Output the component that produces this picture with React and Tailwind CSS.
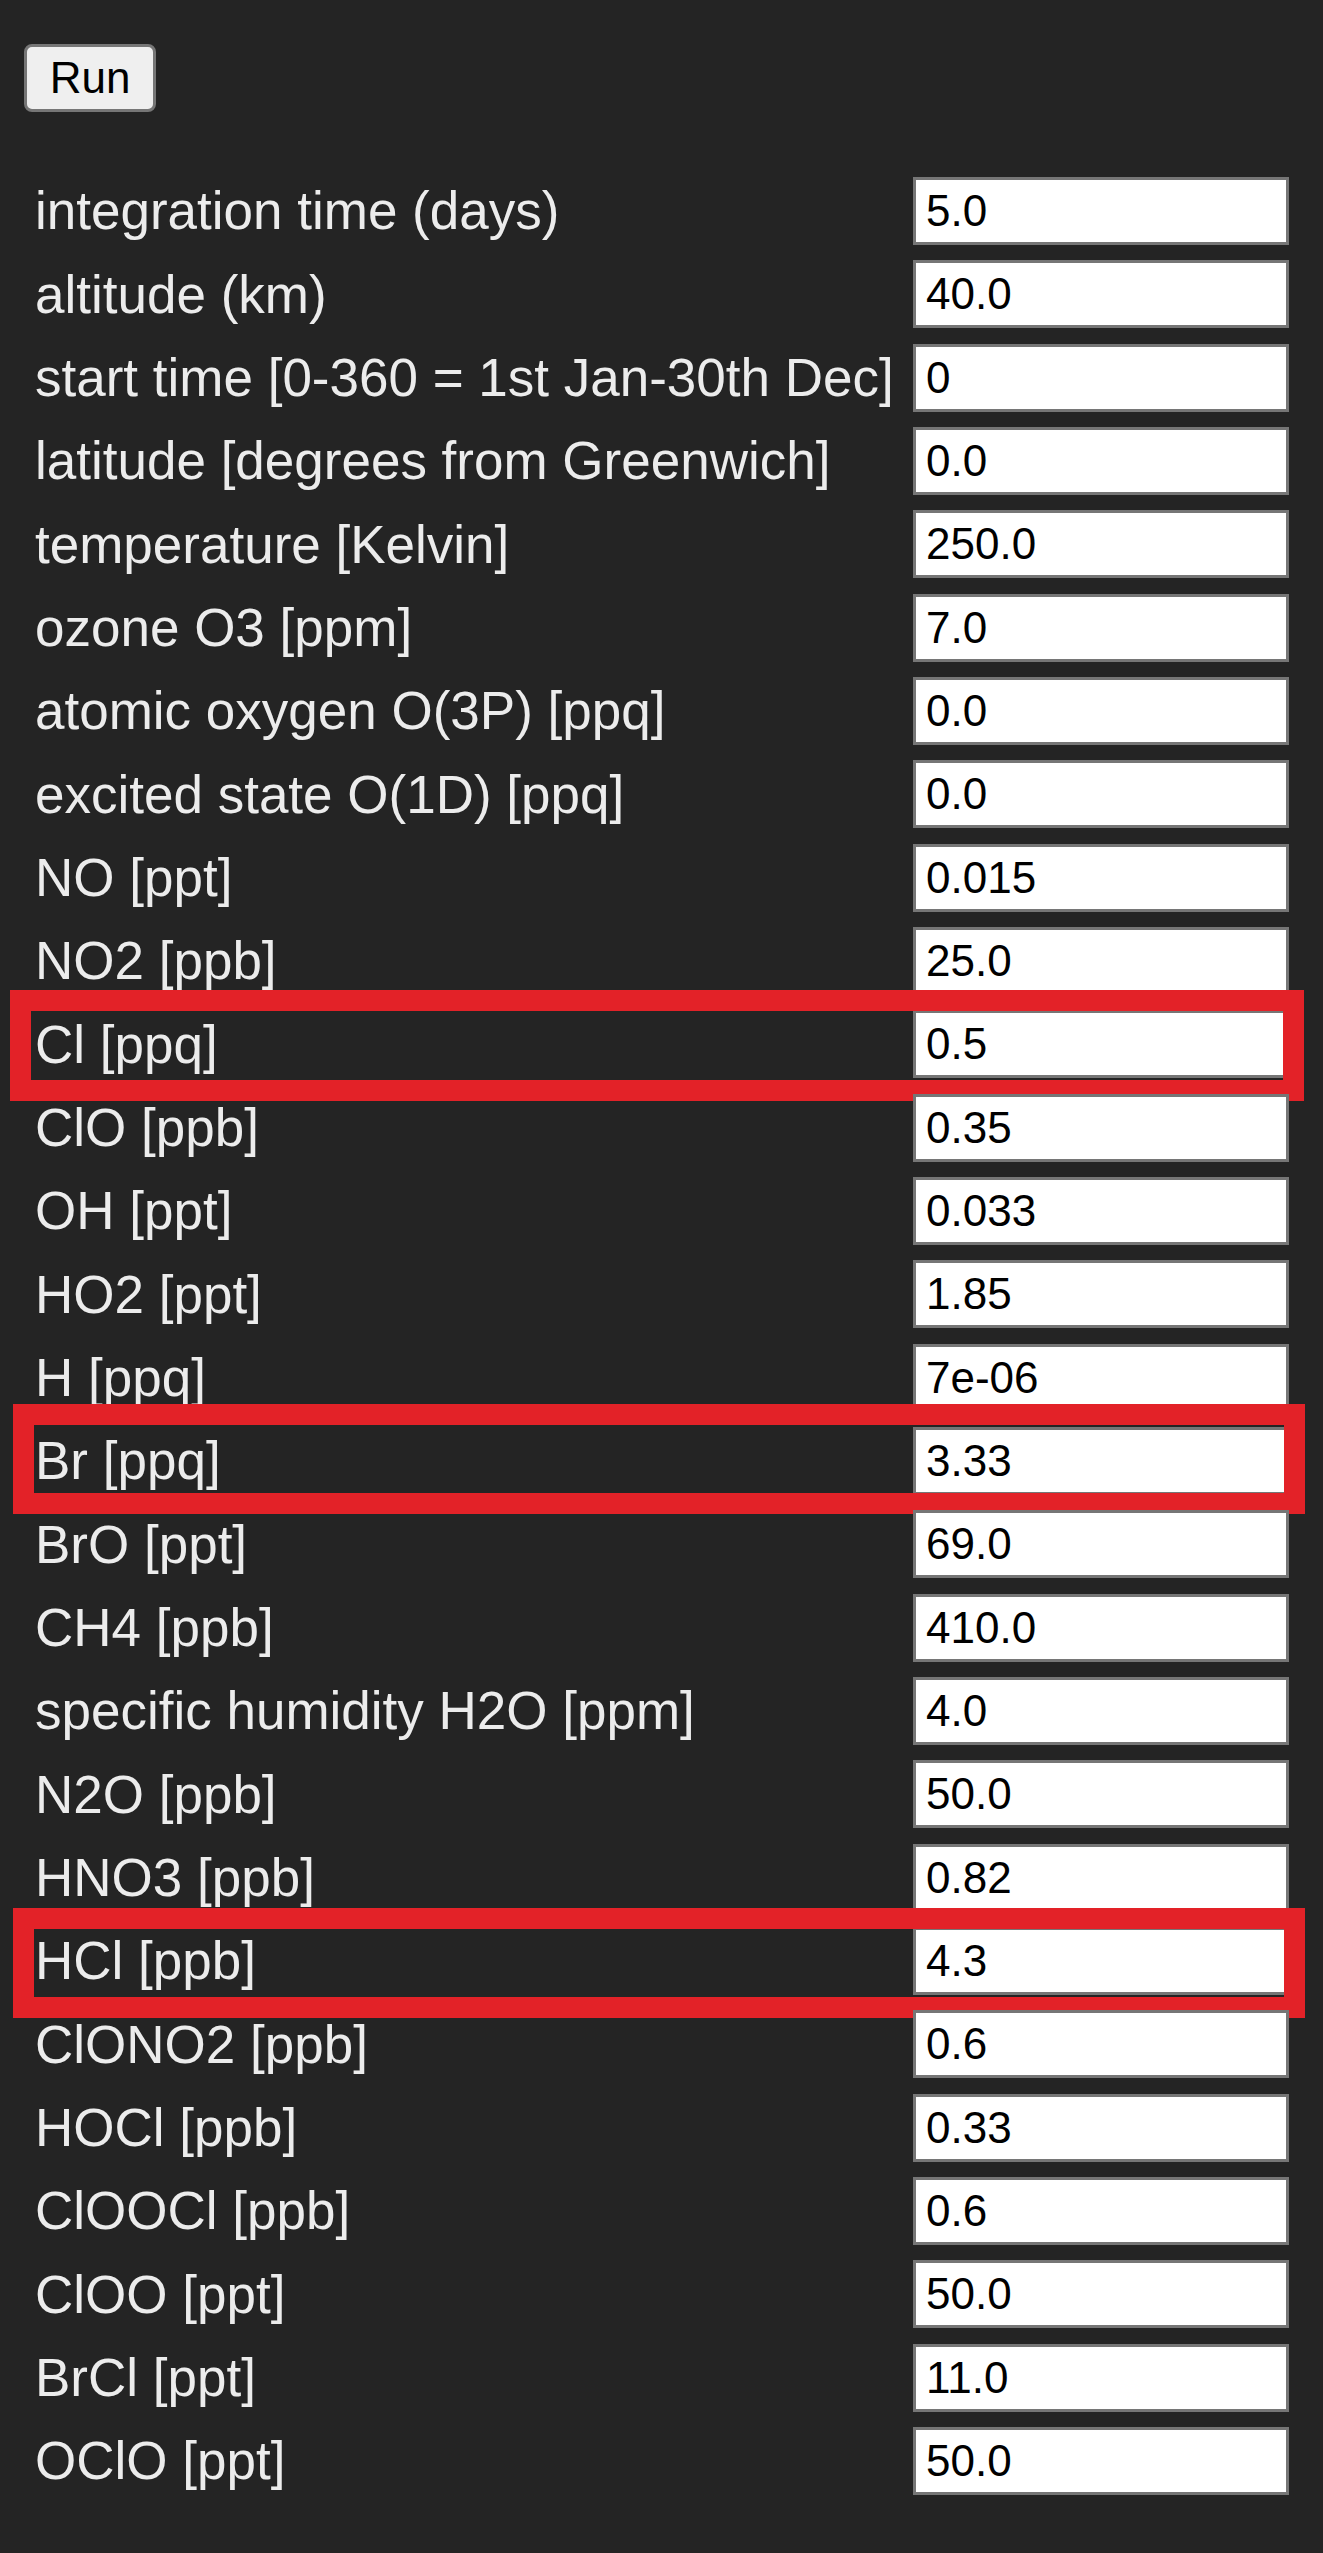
import React from "react";

const rows = [
  ["integration time (days)", "5.0"],
  ["altitude (km)", "40.0"],
  ["start time [0-360 = 1st Jan-30th Dec]", "0"],
  ["latitude [degrees from Greenwich]", "0.0"],
  ["temperature [Kelvin]", "250.0"],
  ["ozone O3 [ppm]", "7.0"],
  ["atomic oxygen O(3P) [ppq]", "0.0"],
  ["excited state O(1D) [ppq]", "0.0"],
  ["NO [ppt]", "0.015"],
  ["NO2 [ppb]", "25.0"],
  ["Cl [ppq]", "0.5", "a"],
  ["ClO [ppb]", "0.35"],
  ["OH [ppt]", "0.033"],
  ["HO2 [ppt]", "1.85"],
  ["H [ppq]", "7e-06"],
  ["Br [ppq]", "3.33", "b"],
  ["BrO [ppt]", "69.0"],
  ["CH4 [ppb]", "410.0"],
  ["specific humidity H2O [ppm]", "4.0"],
  ["N2O [ppb]", "50.0"],
  ["HNO3 [ppb]", "0.82"],
  ["HCl [ppb]", "4.3", "c"],
  ["ClONO2 [ppb]", "0.6"],
  ["HOCl [ppb]", "0.33"],
  ["ClOOCl [ppb]", "0.6"],
  ["ClOO [ppt]", "50.0"],
  ["BrCl [ppt]", "11.0"],
  ["OClO [ppt]", "50.0"],
];

function Highlight({ kind }) {
  if (kind === "a")
    return (
      <div className="pointer-events-none absolute left-[10px] top-[-12.7px] h-[111px] w-[1294px] border-[21px] border-[#e32228]" />
    );
  if (kind === "b")
    return (
      <div className="pointer-events-none absolute left-[13px] top-[-15.3px] h-[110px] w-[1292px] border-[21px] border-[#e32228]" />
    );
  return (
    <div className="pointer-events-none absolute left-[13px] top-[-11px] h-[110px] w-[1292px] border-[21px] border-[#e32228]" />
  );
}

export default function App() {
  return (
    <div className="min-h-[2553px] w-full bg-[#242424] font-['Liberation_Sans',Arial,sans-serif] text-[#ececec]">
      <div className="pl-[24px] pt-[44px]">
        <button className="flex h-[68px] w-[132px] items-center justify-center rounded-[8px] border-[3px] border-[#767676] bg-[#efefef] text-[44px] leading-none text-black">
          Run
        </button>
      </div>
      <div className="mt-[57.33px] flex flex-col">
        {rows.map(([label, value, hl]) => (
          <div key={label} className="relative flex h-[83.333px] items-center">
            <div className="w-[913px] shrink-0 pl-[35px] text-[53px] leading-[61px] whitespace-nowrap">
              {label}
            </div>
            <input
              readOnly
              value={value}
              className="h-[68px] w-[376px] border-[3px] border-[#767676] bg-white pl-[10px] text-[44px] text-black outline-none"
            />
            {hl ? <Highlight kind={hl} /> : null}
          </div>
        ))}
      </div>
    </div>
  );
}
